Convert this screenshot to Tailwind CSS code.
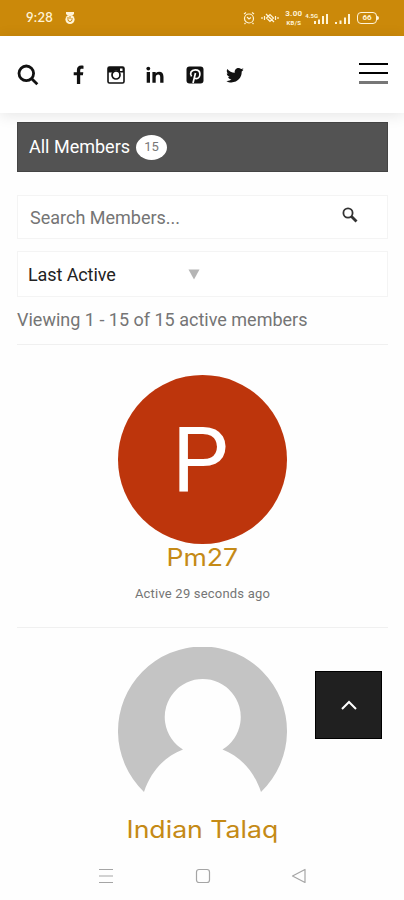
<!DOCTYPE html>
<html lang="en">
<head>
    <meta charset="UTF-8">
    <meta name="viewport" content="width=device-width, initial-scale=1.0">
    <title>All Members</title>
    <!-- Tailwind CSS CDN -->
    <script src="https://cdn.jsdelivr.net/npm/@tailwindcss/browser@4"></script>
</head>
<body class="h-[900px] overflow-hidden bg-[#fefefe] font-[Roboto,sans-serif] text-[#757575]">
    <!-- Status bar -->
    <div class="flex h-9 items-center bg-[#cb890a] pl-[26px] pr-[25px] text-[#fff3d6]">
        <span class="font-[Lato,sans-serif] text-[13px] font-semibold tracking-[0.3px]">9:28</span>
        <svg class="ml-[11px] h-[14px] w-[12px]" viewBox="0 0 12 14" fill="currentColor">
            <path d="M2 1h8v2L8.500 4.500h-5L2 3z"/>
            <circle cx="6" cy="8.500" r="4.600"/>
            <path d="M4 6v2.500a2 2 0 0 0 4 0V7M6 5v3" fill="none" stroke="#cb890a"/>
        </svg>
        <svg class="ml-auto h-[14px] w-[12px]" viewBox="0 0 12 14" fill="none" stroke="currentColor" stroke-width="1.200">
            <circle cx="6" cy="7.500" r="4.500"/>
            <path d="M1 3l2-1.500M11 3L9 1.500M4 6l2 2 2-1.500M2.500 12l-1 1M9.500 12l1 1"/>
        </svg>
        <svg class="ml-[6px] h-[12px] w-[18px]" viewBox="0 0 18 12" fill="none" stroke="currentColor" stroke-width="1.200">
            <path d="M1 5v2M3.500 4v4M14.500 4v4M17 5v2M5.500 6L9 2.500l3.500 3.500L9 9.500zM5 2l8 8"/>
        </svg>
        <div class="ml-[5px] flex w-[19px] flex-col items-center font-bold">
            <span class="text-[8px] leading-[10px] tracking-[0.3px]">3.00</span>
            <span class="text-[6px] leading-[8px] tracking-[0.3px]">KB/S</span>
        </div>
        <div class="ml-[2px] -mt-1 text-[6px] leading-none font-bold">4.5G</div>
        <svg class="-ml-[5px] h-[13px] w-[16px]" viewBox="0 0 16 13" fill="currentColor">
            <path d="M1 9h2v3H1zM5 7.500h2V12H5zM9 4h2v8H9zM13 2h2v10h-2z"/>
        </svg>
        <svg class="ml-[6px] h-[13px] w-[16px]" viewBox="0 0 16 13" fill="currentColor">
            <path d="M0 10h2v2H0zM4.500 8.500h2V12h-2zM9 5.500h2V12H9zM13 2h2v10h-2z"/>
        </svg>
        <div class="ml-[6px] flex h-[12px] w-[20px] items-center justify-center rounded-[4px] border-[1.5px] border-[#fff3d6] text-[8px] leading-none font-bold">66</div>
        <div class="h-1 w-[2px] rounded-r bg-[#fff3d6]"></div>
    </div>

    <!-- Header -->
    <header class="flex h-[77px] items-center bg-white pl-[17px] pr-[16px] text-[#111] shadow-[0_2px_14px_rgba(0,0,0,0.1)]">
        <svg class="h-[22px] w-[22px]" viewBox="0 0 22 22" fill="none" stroke="currentColor" stroke-width="2.800">
            <circle cx="9.300" cy="9.300" r="7.300"/>
            <path d="M14.500 14.500l5.800 5.800"/>
        </svg>
        <svg class="ml-[34px] h-[20px] w-[11px]" viewBox="0 0 11 20" fill="currentColor">
            <path d="M10.500.800v3H8.800c-1.300 0-1.600.6-1.600 1.500v2h3.100l-.4 3H7.200V19H3.900v-8.700H.700v-3h3.200V4.900C3.900 2.200 5.600.600 8.100.600c1.200 0 2.100.1 2.400.2z"/>
        </svg>
        <svg class="ml-[22px] h-[20px] w-[20px]" viewBox="0 0 20 20" fill="none" stroke="currentColor">
            <rect x="2" y="2" width="16" height="16" rx="1.500" stroke-width="1.600"/>
            <path d="M2 2h16v5.500h-4.200A4.700 4.700 0 0 0 6.200 7.500H2z" fill="currentColor" stroke="none"/>
            <rect x="14" y="3.500" width="2.500" height="2.500" fill="white" stroke="none"/>
            <circle cx="10" cy="10" r="4" stroke-width="1.700" fill="white"/>
        </svg>
        <svg class="ml-[20px] h-[18px] w-[18px]" viewBox="0 0 18 18" fill="currentColor">
            <circle cx="2.300" cy="2.600" r="1.900"/>
            <path d="M.700 6h3.300v10.800H.700zM6.400 6h3.300v1.500c.6-1 1.700-1.800 3.400-1.800 3 0 4.400 1.900 4.400 5v6.100h-3.300v-5.700c0-1.500-.5-2.500-1.900-2.500-1.600 0-2.600 1.100-2.600 2.800v5.400H6.400z"/>
        </svg>
        <svg class="ml-[22px] h-[18px] w-[18px]" viewBox="0 0 18 18">
            <rect x=".500" y=".500" width="17" height="17" rx="3" fill="currentColor"/>
            <path d="M5.600 10.400C3.300 7.500 5.200 3.800 9.200 3.800c3 0 4.700 1.800 4.700 4.200 0 2.600-1.500 4.600-3.500 4.600-1 0-1.800-.5-2-1.200M9.500 7L7 17" fill="none" stroke="white" stroke-width="1.700"/>
        </svg>
        <svg class="ml-[22px] h-[18px] w-[18px]" viewBox="0 0 18 18" fill="currentColor">
            <path d="M17.500 3.800c-.5.700-1.100 1.300-1.800 1.800v.5c0 5-3.600 10.300-10.300 10.300-1.800 0-3.600-.5-5-1.500 1.900.2 3.700-.3 5.100-1.400-1.600 0-2.900-1.100-3.400-2.500.5.100 1.100.1 1.600-.1C1.900 10.500.800 9 .800 7.300c.5.300 1.100.5 1.600.5C.8 6.700.300 4.600 1.300 2.900c1.800 2.200 4.500 3.600 7.500 3.800C8.200 4.300 10 2 12.400 2c1 0 2 .4 2.700 1.100.8-.2 1.600-.5 2.300-.9-.3.900-.9 1.500-1.600 2 .6-.1 1.200-.2 1.700-.4z"/>
        </svg>
        <div class="mb-[2px] ml-auto flex w-[29px] flex-col gap-[7px]">
            <div class="h-[2px] bg-black"></div>
            <div class="h-[2px] bg-black"></div>
            <div class="h-[3px] bg-[#777]"></div>
        </div>
    </header>

    <main class="pl-[17px] pr-4 pt-[9px]">
        <div class="flex h-[50px] items-center border border-[#444] bg-[#535353] pl-[11px] text-white">
            <span class="mb-[2px] text-[18px]">All Members</span>
            <span class="ml-[6px] flex h-[25px] w-[31px] items-center justify-center rounded-[50%] bg-white text-[13px] text-[#777]">15</span>
        </div>

        <!-- Search and order -->
        <div class="mt-[23px] flex h-[44px] items-center border border-[#f4f4f4] bg-white pl-[12px] pr-[29px]">
            <span class="text-[18px]">Search Members...</span>
            <svg class="mb-1 ml-auto h-[16px] w-[16px]" viewBox="0 0 16 16" fill="none" stroke="#333">
                <circle cx="6" cy="6" r="4.600" stroke-width="1.800"/>
                <path d="M9.500 9.500l5 5" stroke-width="2.800"/>
            </svg>
        </div>
        <div class="mt-3 flex h-[46px] items-center border border-[#f4f4f4] bg-white pl-[10px] text-[#222]">
            <span class="w-[160px] text-[18px] tracking-[-0.1px]">Last Active</span>
            <svg class="h-[11px] w-[12px]" viewBox="0 0 12 11" fill="#b5b5b5"><path d="M.500.500h11L6 10.500z"/></svg>
        </div>
        <p class="flex h-[48px] items-center border-b border-[#f0f0f0] pb-[2px] text-[18px]">Viewing 1 - 15 of 15 active members</p>

        <!-- Members -->
        <ul>
            <li class="flex h-[283px] flex-col items-center border-b border-[#f0f0f0] pt-[30px]">
                <div class="flex h-[169px] w-[169px] items-center justify-center rounded-full bg-[#bd350c] pt-[2px] pr-1 text-[90px] leading-none text-white">P</div>
                <a class="scale-x-111 font-[Inter,sans-serif] text-[24px] leading-7 text-[#c58a16]">Pm27</a>
                <span class="mt-[12px] text-[13px] leading-5 tracking-[0.2px]">Active 29 seconds ago</span>
            </li>
            <li class="flex flex-col items-center pt-[19px]">
                <svg class="h-[169px] w-[169px]" viewBox="0 0 169 169">
                    <path d="M26 145A84.500 84.500 0 1 1 143 145C136 124 122 109 104.500 102.500A38 38 0 1 0 65 102.500C47 109 33 124 26 145z" fill="#c4c4c4"/>
                </svg>
                <a class="scale-x-111 font-[Inter,sans-serif] text-[24px] leading-7 text-[#c58a16]">Indian Talaq</a>
            </li>
        </ul>
    </main>

    <!-- Back to top -->
    <button class="fixed top-[671px] right-[22px] flex h-[68px] w-[67px] items-center justify-center border border-black bg-[#202020]">
        <svg class="h-[10px] w-4" viewBox="0 0 16 10" fill="none" stroke="white" stroke-width="2"><path d="M1 9l7-7 7 7"/></svg>
    </button>

    <!-- System navigation -->
    <nav class="fixed inset-x-0 bottom-0 flex h-12 items-center bg-[#fefefe] pl-[99px] text-[#a5a5a5]">
        <svg class="h-4 w-[14px]" viewBox="0 0 14 16" fill="none" stroke="currentColor" stroke-width="1.200"><path d="M0 1.500h14M0 8h14M0 14.500h14"/></svg>
        <svg class="ml-[82px] h-4 w-4" viewBox="0 0 16 16" fill="none" stroke="currentColor" stroke-width="1.200"><rect x="1.500" y="1.500" width="13" height="13" rx="2.500"/></svg>
        <svg class="ml-[80px] h-4 w-4" viewBox="0 0 16 16" fill="none" stroke="currentColor" stroke-width="1.200" stroke-linejoin="round"><path d="M1.500 8L14 1.500v13z"/></svg>
    </nav>
</body>
</html>
